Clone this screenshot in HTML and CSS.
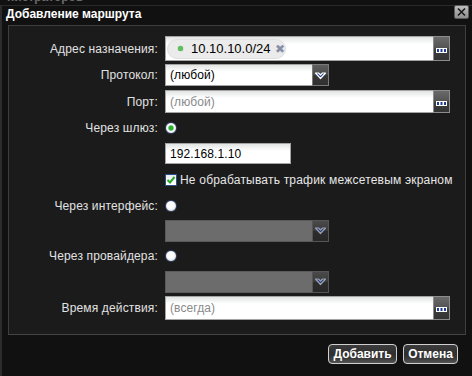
FILE: index.html
```html
<!DOCTYPE html>
<html lang="ru">
<head>
<meta charset="utf-8">
<title>Добавление маршрута</title>
<link rel="stylesheet" href="styles.css">
</head>
<body>
<div class="under"><span>нистраторов</span></div>
<div class="dialog">
  <div class="titlebar">
    <span class="title">Добавление маршрута</span>
    <span class="close"><svg width="11" height="10" viewBox="0 0 11 10"><path d="M2 1.5 L9 8.5 M9 1.5 L2 8.5" stroke="#1a1a1a" stroke-width="1.6" fill="none"/></svg></span>
  </div>
  <div class="panel">
    <div class="row h27">
      <div class="label">Адрес назначения:</div>
      <div class="field wide f25">
        <div class="val tags"><span class="tag"><span class="dot"></span><span class="tagtext">10.10.10.0/24</span><span class="x">✖</span></span></div>
        <span class="dots"><svg width="11" height="5" viewBox="0 0 11 5"><rect x="0" y="0" width="11" height="5" fill="#fff"/><rect x="1" y="1" width="2" height="3" fill="#1f3f94"/><rect x="4.5" y="1" width="2" height="3" fill="#1f3f94"/><rect x="8" y="1" width="2" height="3" fill="#1f3f94"/></svg></span>
      </div>
    </div>
    <div class="row h26">
      <div class="label">Протокол:</div>
      <div class="field sel">
        <div class="val">(любой)</div>
        <span class="arrow"><svg width="13" height="9" viewBox="0 0 13 9"><path d="M1.5 2 L4.5 2 L6.5 4 L8.5 2 L11.5 2 L6.5 7.5 Z" fill="#1f3f94" stroke="#fff" stroke-width="1.2" stroke-linejoin="round"/></svg></span>
      </div>
    </div>
    <div class="row h27">
      <div class="label">Порт:</div>
      <div class="field wide f23">
        <div class="val ph">(любой)</div>
        <span class="dots"><svg width="11" height="5" viewBox="0 0 11 5"><rect x="0" y="0" width="11" height="5" fill="#fff"/><rect x="1" y="1" width="2" height="3" fill="#1f3f94"/><rect x="4.5" y="1" width="2" height="3" fill="#1f3f94"/><rect x="8" y="1" width="2" height="3" fill="#1f3f94"/></svg></span>
      </div>
    </div>
    <div class="row h26">
      <div class="label">Через шлюз:</div>
      <div><span class="radio on"></span></div>
    </div>
    <div class="row h25">
      <div class="label"></div>
      <div class="field short f21"><div class="val">192.168.1.10</div></div>
    </div>
    <div class="row h27">
      <div class="label"></div>
      <div class="check-line"><span class="check"><svg width="10" height="10" viewBox="0 0 10 10"><path d="M1.5 5 L4 7.5 L8.5 2" stroke="#2aa52a" stroke-width="2" fill="none"/></svg></span><span class="ctext">Не обрабатывать трафик межсетевым экраном</span></div>
    </div>
    <div class="row h25">
      <div class="label">Через интерфейс:</div>
      <div><span class="radio"></span></div>
    </div>
    <div class="row h25">
      <div class="label"></div>
      <div class="field sel dis">
        <div class="val"></div>
        <span class="arrow"><svg width="13" height="9" viewBox="0 0 13 9"><path d="M1.5 2 L4.5 2 L6.5 4 L8.5 2 L11.5 2 L6.5 7.5 Z" fill="#233a7a" stroke="#9aa0b0" stroke-width="1.2" stroke-linejoin="round"/></svg></span>
      </div>
    </div>
    <div class="row h26">
      <div class="label">Через провайдера:</div>
      <div><span class="radio"></span></div>
    </div>
    <div class="row h25">
      <div class="label"></div>
      <div class="field sel dis">
        <div class="val"></div>
        <span class="arrow"><svg width="13" height="9" viewBox="0 0 13 9"><path d="M1.5 2 L4.5 2 L6.5 4 L8.5 2 L11.5 2 L6.5 7.5 Z" fill="#233a7a" stroke="#9aa0b0" stroke-width="1.2" stroke-linejoin="round"/></svg></span>
      </div>
    </div>
    <div class="row h27">
      <div class="label">Время действия:</div>
      <div class="field wide f24">
        <div class="val ph">(всегда)</div>
        <span class="dots"><svg width="11" height="5" viewBox="0 0 11 5"><rect x="0" y="0" width="11" height="5" fill="#fff"/><rect x="1" y="1" width="2" height="3" fill="#1f3f94"/><rect x="4.5" y="1" width="2" height="3" fill="#1f3f94"/><rect x="8" y="1" width="2" height="3" fill="#1f3f94"/></svg></span>
      </div>
    </div>
  </div>
  <div class="footer">
    <button class="btn add">Добавить</button>
    <button class="btn cancel">Отмена</button>
  </div>
</div>
</body>
</html>
```
FILE: styles.css
```css
* { box-sizing: border-box; }
html, body { margin: 0; padding: 0; }
body {
  background: #111;
  width: 472px;
  height: 376px;
  overflow: hidden;
  font-family: "Liberation Sans", Arial, sans-serif;
  font-size: 12px;
  color: #e4e4e4;
}
.under {
  height: 5px;
  overflow: hidden;
  padding-left: 7px;
  color: #6a6a6a;
  font-weight: bold;
  font-size: 12px;
}
.under span { display: block; line-height: 12px; margin-top: -9px; }
.dialog {
  border-left: 2px solid #2c2c2c;
  border-top: 1px solid #2a2a2a;
  background: #111;
  height: 371px;
}
.titlebar {
  height: 19px;
  display: flex;
  justify-content: space-between;
  align-items: flex-start;
  padding-left: 4px;
}
.title {
  color: #fff;
  font-weight: bold;
  font-size: 12px;
  line-height: 16px;
}
.close {
  width: 15px;
  height: 14px;
  margin: -1px 3px 0 0;
  border: 1px solid #5a5a5a;
  border-radius: 2px;
  background: linear-gradient(#bdbdbd, #8e8e8e);
  display: flex;
  align-items: center;
  justify-content: center;
}
.panel {
  margin-left: 6px;
  width: 458px;
  height: 310px;
  border: 1px solid #3e3e3e;
  border-bottom-color: #454545;
  background: #1b1b1b;
  padding-top: 9px;
}
.row {
  display: grid;
  grid-template-columns: 150px auto;
  column-gap: 6px;
  align-items: center;
  justify-items: start;
}
.h25 { height: 25px; }
.h26 { height: 26px; }
.h27 { height: 27px; }
.label {
  justify-self: end;
  padding-right: 1px;
  color: #e2e2e2;
  white-space: nowrap;
  letter-spacing: 0.15px;
}
.field {
  display: flex;
  border: 1px solid #a4a4a4;
  background: linear-gradient(#e2e4e4, #ffffff 7px);
  color: #000;
}
.field .val {
  flex: 1;
  display: flex;
  align-items: center;
  padding-left: 4px;
  white-space: nowrap;
  letter-spacing: 0.1px;
}
.field .ph { color: #8a8a8a; }
.wide { width: 285px; }
.short { width: 126px; }
.f25 { height: 25px; }
.f24 { height: 24px; }
.f23 { height: 23px; }
.f21 { height: 21px; }
.sel { width: 164px; height: 22px; }
.dots {
  width: 17px;
  margin: -1px -1px -1px 0;
  border: 1px solid #8c8c8c;
  background: linear-gradient(#6a6a6a, #555 45%, #3c3c3c 55%, #343434);
  display: flex;
  align-items: center;
  justify-content: center;
  padding-top: 4px;
}
.dots svg { display: block; }
.arrow {
  width: 17px;
  margin: -1px -1px -1px 0;
  border: 1px solid #7a7a7a;
  background: linear-gradient(#5e5e5e, #4a4a4a 50%, #383838 50%, #303030);
  display: flex;
  align-items: center;
  justify-content: center;
}
.arrow svg { display: block; }
.dis { background: #6c6c6c; border-color: #5a5a5a; }
.dis .arrow { background: linear-gradient(#4a4a4a, #3a3a3a 50%, #2c2c2c 50%, #282828); border-color: #555; }
.tags { padding-left: 1px !important; }
.tag {
  display: flex;
  align-items: center;
  height: 20px;
  width: 119px;
  padding-left: 10px;
  border-radius: 10px;
  background: #ebebeb;
  border: 1px solid #e0e0e0;
}
.dot {
  width: 5px;
  height: 5px;
  border-radius: 50%;
  background: #5fbf5f;
  box-shadow: 0 0 1px #3a3;
}
.tagtext {
  font-size: 13px;
  margin-left: 8px;
  color: #000;
  letter-spacing: 0;
}
.x {
  margin-left: 4px;
  font-size: 12px;
  color: #8790a6;
}
.radio {
  display: block;
  width: 12px;
  height: 12px;
  border-radius: 50%;
  border: 1px solid #2c3f62;
  background: radial-gradient(circle at 45% 40%, #ffffff 0 3px, #dfe3ea 6px);
}
.radio.on {
  background: radial-gradient(circle at 50% 50%, #2fae2f 0 2px, #7ccf7c 2.5px, #ffffff 3.5px, #dce2ec 6px);
}
.check-line {
  display: flex;
  align-items: center;
  gap: 3px;
  color: #e6e6e6;
  white-space: nowrap;
}
.ctext { letter-spacing: 0.2px; }
.check {
  width: 12px;
  height: 12px;
  border: 1px solid #2b4d86;
  background: linear-gradient(#e8ecf2, #fff);
  display: flex;
  align-items: center;
  justify-content: center;
}
.check svg { display: block; }
.footer {
  display: flex;
  justify-content: flex-end;
  gap: 6px;
  margin-top: 9px;
  padding-right: 14px;
}
.btn {
  height: 20px;
  padding: 0;
  border: 1px solid #cfcfcf;
  border-radius: 4px;
  background: linear-gradient(#3c3c3c, #2e2e2e 50%, #3a3a3a 75%, #555);
  color: #fff;
  font-family: "Liberation Sans", Arial, sans-serif;
  font-weight: bold;
  font-size: 12px;
  line-height: 18px;
}
.add { width: 69px; }
.cancel { width: 55px; }
```
